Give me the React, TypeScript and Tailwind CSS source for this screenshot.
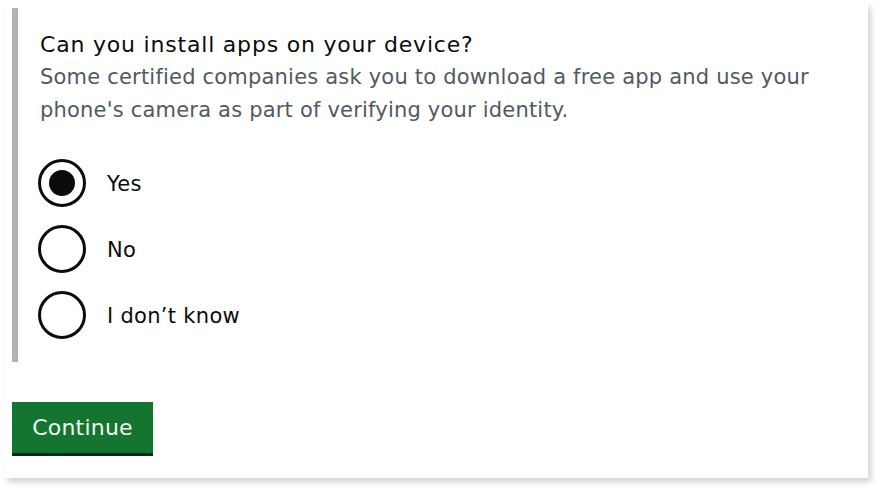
import { useState } from "react";

const options = ["Yes", "No", "I don’t know"];

export default function App() {
	const [selected, setSelected] = useState("Yes");

	return (
		<div className="min-h-[492px] bg-white pl-[4px] pt-[3px] pr-[14px] pb-[14px] font-['DejaVu_Sans',Verdana,sans-serif] text-[#0b0c0c]">
			<div className="h-[475px] bg-white pl-[8px] pt-[5px] shadow-[3px_4px_6px_rgba(0,0,0,0.18)]">
				<fieldset className="border-l-[6px] border-[#b1b4b6] pl-[22px] pt-[20px] pb-[23px] w-[810px]">
					<legend className="contents">
						<span className="block text-[22px] leading-[33px] tracking-[0.8px]">
							Can you install apps on your device?
						</span>
					</legend>
					<p className="text-[21px] leading-[33px] tracking-[0.2px] text-[#505a5f]">
						Some certified companies ask you to download a free app and use your phone's camera as part of
						verifying your identity.
					</p>
					<div className="mt-[32px] flex flex-col gap-[18px] -ml-[2px]">
						{options.map((opt) => (
							<label key={opt} className="flex items-center gap-[21px] cursor-pointer">
								<input
									type="radio"
									name="apps"
									className="sr-only"
									checked={selected === opt}
									onChange={() => setSelected(opt)}
								/>
								<span className="flex size-[48px] items-center justify-center rounded-full border-[3px] border-[#0b0c0c]">
									{selected === opt && <span className="size-[26px] rounded-full bg-[#0b0c0c]" />}
								</span>
								<span className="pt-[2px] text-[21px] leading-[33px] tracking-[0.3px]">{opt}</span>
							</label>
						))}
					</div>
				</fieldset>
				<button className="mt-[40px] h-[51px] w-[141px] bg-[#137530] text-[22px] tracking-[0.2px] text-[#f3f3f3] shadow-[0_3px_0_#002d18]">
					Continue
				</button>
			</div>
		</div>
	);
}
